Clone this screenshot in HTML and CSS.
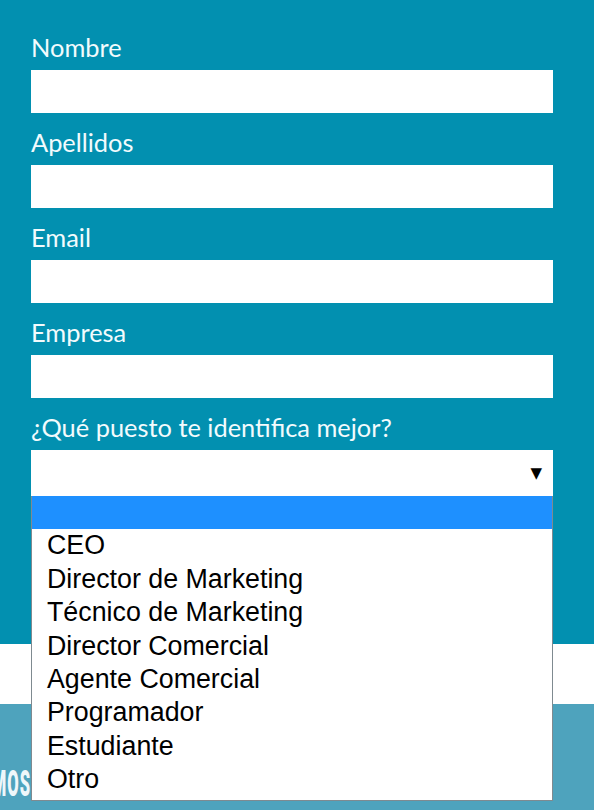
FILE: index.html
```html
<!DOCTYPE html>
<html lang="es">
<head>
<meta charset="utf-8">
<title>Formulario</title>
<link rel="stylesheet" href="styles.css">
</head>
<body>
<section class="form-section">
  <form class="form">
    <label class="label">Nombre</label>
    <input class="input" type="text">
    <label class="label">Apellidos</label>
    <input class="input" type="text">
    <label class="label">Email</label>
    <input class="input" type="text">
    <label class="label">Empresa</label>
    <input class="input" type="text">
    <label class="label">¿Qué puesto te identifica mejor?</label>
    <div class="select">
      <span class="select-arrow">▼</span>
      <ul class="dropdown">
        <li class="option option-active">&nbsp;</li>
        <li class="option">CEO</li>
        <li class="option">Director de Marketing</li>
        <li class="option">Técnico de Marketing</li>
        <li class="option">Director Comercial</li>
        <li class="option">Agente Comercial</li>
        <li class="option">Programador</li>
        <li class="option">Estudiante</li>
        <li class="option">Otro</li>
      </ul>
    </div>
  </form>
</section>
<div class="white-band"></div>
<section class="footer-band">
  <h2 class="footer-title"><span class="footer-title-text">MOS</span></h2>
</section>
</body>
</html>
```
FILE: styles.css
```css
* { box-sizing: border-box; }
html, body { margin: 0; padding: 0; }
body { background: #ffffff; font-family: Lato, "Noto Sans", sans-serif; overflow: hidden; }

.form-section {
  background: #0290b0;
  padding: 18px 41px 148px 31px;
}
.form { display: flex; flex-direction: column; }

.label {
  display: block;
  height: 52px;
  padding-top: 14px;
  line-height: 30px;
  font-size: 25.4px;
  color: #f2fbfd;
  font-weight: 400;
  white-space: nowrap;
}

.input {
  display: block;
  width: 100%;
  height: 43px;
  border: 0;
  margin: 0;
  padding: 0 12px;
  background: #ffffff;
  outline: none;
}

.select {
  position: relative;
  height: 46px;
  background: #ffffff;
}
.select-arrow {
  position: absolute;
  right: 11px;
  top: 13px;
  font-family: "DejaVu Sans", sans-serif;
  font-size: 15px;
  line-height: 20px;
  color: #000;
}

.dropdown {
  position: absolute;
  left: 0;
  right: 0;
  top: 46px;
  margin: 0;
  padding: 0 0 3px;
  list-style: none;
  background: #ffffff;
  border: 1px solid #7f8a90;
  border-top: 0;
  z-index: 2;
}
.option {
  height: 33.4px;
  line-height: 33.4px;
  padding-left: 15px;
  font-family: "Liberation Sans", Arial, sans-serif;
  font-size: 26.8px;
  color: #000;
  white-space: nowrap;
}
.option-active { background: #1e90ff; }

.white-band { height: 60px; background: #ffffff; }

.footer-band {
  height: 106px;
  background: #4ea3bd;
  padding-top: 60px;
}
.footer-title {
  display: flex;
  justify-content: flex-end;
  width: 31px;
  margin: 0;
  overflow: hidden;
  font-family: Roboto, "DejaVu Sans", sans-serif;
  font-weight: 900;
  font-size: 36px;
  line-height: 40px;
  color: #eef7fa;
  white-space: nowrap;
}
.footer-title-text {
  display: inline-block;
  flex: none;
  transform: scaleX(0.46);
  transform-origin: 100% 50%;
  letter-spacing: 2px;
}
```
